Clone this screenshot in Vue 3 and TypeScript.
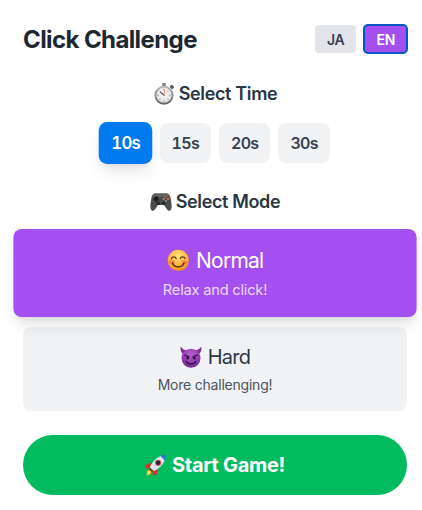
<script setup lang="ts">
import { ref } from 'vue'

const langs = ['JA', 'EN']
const times = [10, 15, 20, 30]

const lang = ref('EN')
const time = ref(10)
const mode = ref('normal')
</script>

<template>
	<div class="page">
		<header class="header">
			<h1 class="title">Click Challenge</h1>
			<div class="langs">
				<button
					v-for="l in langs"
					:key="l"
					class="lang"
					:class="{ active: lang === l }"
					@click="lang = l"
				>{{ l }}</button>
			</div>
		</header>

		<h2 class="label">
			<svg class="emoji" viewBox="0 0 36 36">
				<defs>
					<linearGradient id="watchCase" x1="0" y1="0" x2="0" y2="1">
						<stop offset="0" stop-color="#b4b8ba" />
						<stop offset="1" stop-color="#5f6366" />
					</linearGradient>
					<radialGradient id="watchDial" cx="0.5" cy="0.4" r="0.7">
						<stop offset="0" stop-color="#ffffff" />
						<stop offset="1" stop-color="#d9d5d0" />
					</radialGradient>
				</defs>
				<rect x="15" y="0" width="6" height="5" rx="1" fill="#85898c" />
				<rect x="28" y="4" width="6" height="5" rx="1" transform="rotate(45 31 6.500)" fill="#55595c" />
				<circle cx="18" cy="20" r="15.500" fill="url(#watchCase)" />
				<circle cx="18" cy="20" r="12.500" fill="url(#watchDial)" />
				<path d="M18 9v3M18 28v3M7 20h3M26 20h3M10.500 12.500l2 2M23.500 25.500l2 2M25.500 12.500l-2 2M12.500 25.500l-2 2" stroke="#8a8d90" stroke-width="1.200" />
				<path d="M18 20l-6-5" stroke="#4c4f52" stroke-width="1.800" stroke-linecap="round" />
				<path d="M18 20l1-9" stroke="#d9603c" stroke-width="1.200" stroke-linecap="round" />
			</svg>
			Select Time
		</h2>
		<div class="times">
			<button
				v-for="t in times"
				:key="t"
				class="time"
				:class="{ active: time === t }"
				@click="time = t"
			>{{ t }}s</button>
		</div>

		<h2 class="label">
			<svg class="emoji" viewBox="0 0 36 36">
				<path d="M9 4h18c4 0 6 3 7 9 1 6 3 16-1 19-3 2-7-4-9-8-1-1-2-1-3-1h-6c-1 0-2 0-3 1-2 4-6 10-9 8-4-3-2-13-1-19 1-6 3-9 7-9z" fill="#4a4e4b" />
				<path d="M9 4h18c3 0 5 2 6 6H3c1-4 3-6 6-6z" fill="#5f6360" />
				<circle cx="10" cy="13" r="4.500" fill="#303231" />
				<path d="M8.800 9h2.400v2.800H14v2.400h-2.800V17H8.800v-2.800H6v-2.400h2.800z" fill="#151616" />
				<circle cx="26" cy="9.500" r="1.800" fill="#d8502c" />
				<circle cx="29.500" cy="13" r="1.800" fill="#e0762f" />
				<circle cx="22.500" cy="13" r="1.800" fill="#8e9290" />
				<circle cx="26" cy="16.500" r="1.800" fill="#8e9290" />
				<circle cx="13.500" cy="20" r="3" fill="#272928" />
				<circle cx="22.500" cy="20" r="3" fill="#272928" />
			</svg>
			Select Mode
		</h2>
		<div class="modes">
			<button class="mode" :class="{ active: mode === 'normal' }" @click="mode = 'normal'">
				<span class="mode-name">
					<svg class="emoji" viewBox="0 0 36 36">
						<defs>
							<radialGradient id="smileFace" cx="0.5" cy="0.3" r="0.8">
								<stop offset="0" stop-color="#ffe27a" />
								<stop offset="0.55" stop-color="#fdb53f" />
								<stop offset="1" stop-color="#f0761c" />
							</radialGradient>
						</defs>
						<circle cx="18" cy="18" r="16.500" fill="url(#smileFace)" />
						<ellipse cx="8" cy="21" rx="5" ry="3.500" fill="#f2783a" opacity="0.65" />
						<ellipse cx="28" cy="21" rx="5" ry="3.500" fill="#f2783a" opacity="0.65" />
						<path d="M7.500 15c1.200-3.500 6-3.500 7.200 0M21.300 15c1.200-3.500 6-3.500 7.200 0" fill="none" stroke="#5b3410" stroke-width="2" stroke-linecap="round" />
						<path d="M9 22c3 8 15 8 18 0" fill="none" stroke="#5b3410" stroke-width="2.200" stroke-linecap="round" />
					</svg>
					Normal
				</span>
				<span class="mode-desc">Relax and click!</span>
			</button>
			<button class="mode" :class="{ active: mode === 'hard' }" @click="mode = 'hard'">
				<span class="mode-name">
					<svg class="emoji" viewBox="0 0 36 36">
						<defs>
							<radialGradient id="devilFace" cx="0.5" cy="0.3" r="0.8">
								<stop offset="0" stop-color="#b860d0" />
								<stop offset="0.6" stop-color="#8f38ac" />
								<stop offset="1" stop-color="#5f1f80" />
							</radialGradient>
						</defs>
						<path d="M1 1c-1 6 1 11 6 14l6-7C8 7 4 6 1 1zM35 1c1 6-1 11-6 14l-6-7c5-1 9-2 12-7z" fill="#7c3296" />
						<circle cx="18" cy="20" r="15.500" fill="url(#devilFace)" />
						<path d="M8 15l7 3M28 15l-7 3" stroke="#2f0e45" stroke-width="2" stroke-linecap="round" />
						<ellipse cx="12.500" cy="20" rx="2" ry="2.200" fill="#2f0e45" />
						<ellipse cx="23.500" cy="20" rx="2" ry="2.200" fill="#2f0e45" />
						<path d="M10 25c3 6 13 6 16 0" fill="none" stroke="#2f0e45" stroke-width="2.200" stroke-linecap="round" />
					</svg>
					Hard
				</span>
				<span class="mode-desc">More challenging!</span>
			</button>
		</div>

		<button class="start">
			<svg class="emoji" viewBox="0 0 36 36">
				<path d="M3 28l5-2 2 2-1 5-6 2z" fill="#f6c12c" />
				<path d="M5 29l3-1 1 1-1 3-3 1z" fill="#fde26a" />
				<path d="M11 14L1 18l1 6 6-1zM22 25l-4 10-6-1 1-6z" fill="#d8302a" />
				<path d="M8 22C12 11 22 3 35 1c-2 13-10 23-21 27z" fill="#dbe5ea" />
				<path d="M25 3c3-1 6-1.600 10-2-.4 4-1.200 7-2.400 10z" fill="#2f78c4" />
				<circle cx="21.500" cy="14.500" r="5" fill="#c9455a" />
				<circle cx="21.500" cy="14.500" r="3.400" fill="#1d2834" />
				<path d="M8 22l6 6-3 1.500-4.500-4.500z" fill="#9a2a22" />
			</svg>
			Start Game!
		</button>
	</div>
</template>

<style>
html, body {
	overflow: hidden;
	background: #fff;
}
</style>

<style scoped>
.page {
	box-sizing: border-box;
	width: 430px;
	padding: 23px;
	font-family: Inter, "Noto Sans", sans-serif;
	color: #1f2937;
}
button {
	font-family: inherit;
	border: none;
	cursor: pointer;
}
.emoji {
	display: inline-block;
	flex: none;
	width: 22px;
	height: 22px;
}
.header {
	display: flex;
	align-items: center;
	justify-content: space-between;
	margin-bottom: 24px;
}
.title {
	margin: 0;
	padding-top: 2px;
	font-size: 24px;
	line-height: 30px;
	font-weight: 700;
	letter-spacing: -0.6px;
	color: #1c2733;
}
.langs {
	display: flex;
	gap: 8px;
}
.lang {
	height: 28px;
	padding: 0 12px;
	border-radius: 4px;
	font-size: 14px;
	font-weight: 600;
	letter-spacing: -0.3px;
	background: #e2e4e9;
	color: #374151;
}
.lang.active {
	background: #a44ff0;
	color: #fff;
	outline: 2px solid #0059c1;
	outline-offset: -1px;
}
.label {
	display: flex;
	align-items: center;
	justify-content: center;
	gap: 4px;
	margin: 0 0 16px;
	padding-top: 2px;
	font-size: 18px;
	line-height: 26px;
	font-weight: 600;
	letter-spacing: -0.36px;
	color: #2b3645;
}
.times {
	display: flex;
	justify-content: center;
	gap: 8px;
	margin-bottom: 24px;
}
.time {
	height: 40px;
	padding: 0 12px;
	border-radius: 8px;
	font-size: 16px;
	font-weight: 600;
	font-variant-numeric: tabular-nums;
	letter-spacing: -0.7px;
	background: #f1f2f4;
	color: #374151;
}
.time.active {
	background: #007aef;
	color: #fff;
	transform: scale(1.05);
	box-shadow: 0 10px 15px -3px rgba(0, 0, 0, 0.1), 0 4px 6px -4px rgba(0, 0, 0, 0.1);
}
.modes {
	display: flex;
	flex-direction: column;
	gap: 12px;
	margin-bottom: 24px;
}
.mode {
	display: flex;
	flex-direction: column;
	align-items: center;
	gap: 4px;
	padding: 16px;
	border-radius: 8px;
	background: #f1f2f4;
	color: #2b3645;
}
.mode.active {
	background: #a44ff0;
	color: #fff;
	transform: scale(1.05);
	box-shadow: 0 10px 15px -3px rgba(0, 0, 0, 0.1), 0 4px 6px -4px rgba(0, 0, 0, 0.1);
}
.mode-name {
	display: flex;
	align-items: center;
	gap: 6px;
	font-size: 20px;
	line-height: 28px;
	font-weight: 400;
	letter-spacing: -0.7px;
}
.mode-desc {
	font-size: 14px;
	line-height: 20px;
	letter-spacing: -0.22px;
	color: #4b5563;
}
.mode.active .mode-desc {
	color: #ecd9fd;
}
.start {
	display: flex;
	align-items: center;
	justify-content: center;
	gap: 5px;
	width: 100%;
	height: 60px;
	border-radius: 30px;
	font-size: 20px;
	line-height: 28px;
	font-weight: 700;
	letter-spacing: -0.3px;
	background: #02bb5e;
	color: #fff;
}
</style>
